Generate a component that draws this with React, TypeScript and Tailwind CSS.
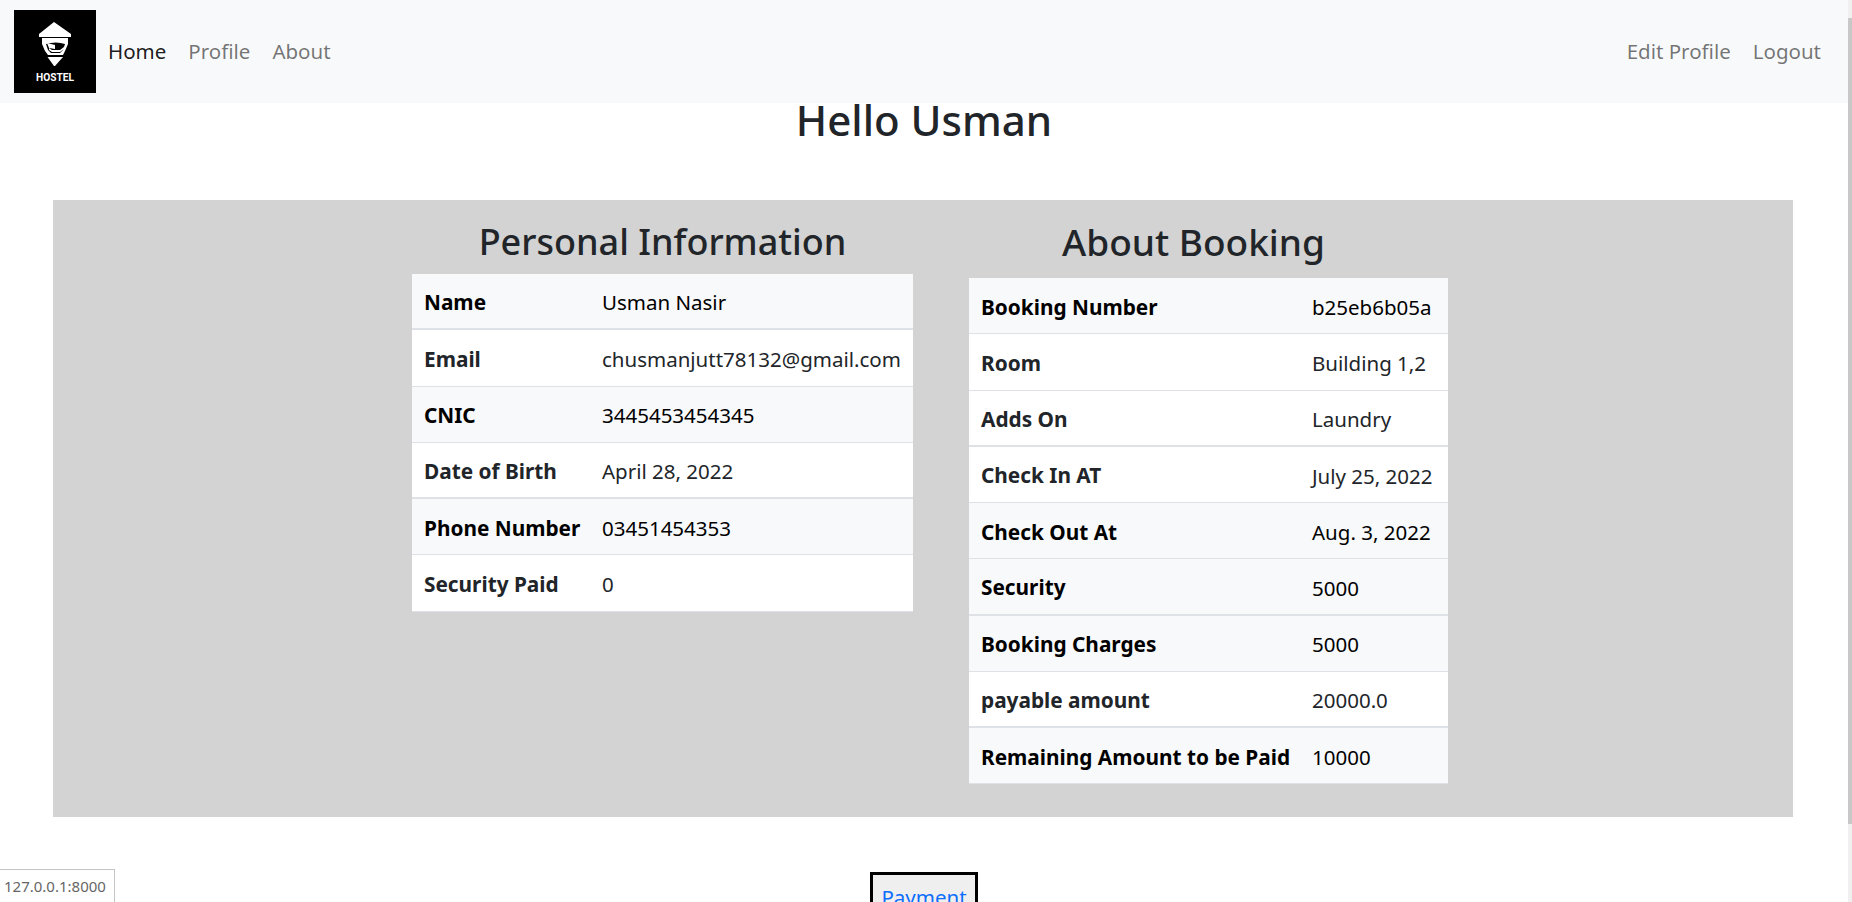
import React from 'react'

type Row = {
  label: string
  value: string
  shaded?: boolean
  thick?: boolean
}

const personal: Row[] = [
  { label: 'Name', value: 'Usman Nasir', shaded: true, thick: true },
  { label: 'Email', value: 'chusmanjutt78132@gmail.com' },
  { label: 'CNIC', value: '3445453454345', shaded: true },
  { label: 'Date of Birth', value: 'April 28, 2022', thick: true },
  { label: 'Phone Number', value: '03451454353', shaded: true },
  { label: 'Security Paid', value: '0' },
]

const booking: Row[] = [
  { label: 'Booking Number', value: 'b25eb6b05a', shaded: true },
  { label: 'Room', value: 'Building 1,2' },
  { label: 'Adds On', value: 'Laundry', thick: true },
  { label: 'Check In AT', value: 'July 25, 2022' },
  { label: 'Check Out At', value: 'Aug. 3, 2022', shaded: true },
  { label: 'Security', value: '5000', shaded: true, thick: true },
  { label: 'Booking Charges', value: '5000', shaded: true },
  { label: 'payable amount', value: '20000.0', thick: true },
  { label: 'Remaining Amount to be Paid', value: '10000', shaded: true },
]

function Logo() {
  return (
    <svg width="82" height="83" viewBox="0 0 82 83" className="shrink-0 bg-black">
      {/* roof */}
      <path d="M40 12 L57 24 V27 H25 V24 Z" fill="#fff" />
      {/* band under the roof and the two sides */}
      <path d="M28 28 H54 V34 L51 41 L49 45 H34 L31 41 L28 34 Z" fill="#fff" />
      {/* room */}
      <path d="M32 34 L34 40 L37 43 H46 L49 40 L51 34 Q42 31 32 34 Z" fill="#000" />
      {/* pillow and bed */}
      <path d="M33 33 L41 35 V39 L35 38 Z" fill="#fff" />
      <path d="M35 38 L38 40 H46 L50 37 V39 L46 42 H38 L35 40 Z" fill="#fff" />
      {/* point */}
      <path d="M33.5 47 H49 L41 56 H40 Z" fill="#fff" />
      <text x="41" y="71" fill="#fff" fontSize="11" fontWeight="700" textAnchor="middle" textLength="38" lengthAdjust="spacingAndGlyphs" fontFamily="Roboto, sans-serif">
        HOSTEL
      </text>
    </svg>
  )
}

function InfoTable({ rows, labelWidth }: { rows: Row[]; labelWidth: string }) {
  return (
    <div className="w-full bg-white">
      {rows.map((row) => (
        <div
          key={row.label}
          className={`flex h-[56.25px] items-center pt-[3px] border-[#dee2e6] ${row.thick ? 'border-b-2' : 'border-b'} ${row.shaded ? 'bg-[#f8f9fa] text-black' : 'bg-white text-[#212529]'}`}
        >
          <div className={`${labelWidth} shrink-0 pl-3 text-[20.8px] font-bold whitespace-nowrap`}>{row.label}</div>
          <div className="pl-[10px] whitespace-nowrap">{row.value}</div>
        </div>
      ))}
    </div>
  )
}

export default function App() {
  return (
    <div className="relative flex h-[902px] overflow-hidden bg-white font-['Noto_Sans',sans-serif] text-[20.5px] text-[#212529]">
      <div className="min-w-0 flex-1">
        <nav className="flex h-[103px] items-center justify-between bg-[#f8f9fa] pl-[14px] pr-[27px]">
          <div className="flex items-center">
            <Logo />
            <a className="ml-3 text-black/90">Home</a>
            <a className="ml-[22px] text-black/55">Profile</a>
            <a className="ml-[22px] text-black/55">About</a>
          </div>
          <div className="flex items-center gap-[22px] text-black/55">
            <a>Edit Profile</a>
            <a>Logout</a>
          </div>
        </nav>

        <h1 className="text-center text-[42px] leading-[33px] font-medium">Hello Usman</h1>

        <section className="mt-[64px] ml-[53px] mr-[55px] flex h-[617px] items-start gap-[56px] bg-[#d3d3d3] pl-[359px]">
          <div className="w-[501px]">
            <h2 className="h-[74px] text-center text-[36px] leading-[84px] font-medium">Personal Information</h2>
            <InfoTable rows={personal} labelWidth="w-[180px]" />
          </div>
          <div className="w-[479px]">
            <h2 className="h-[78px] pr-[30px] text-center text-[37px] leading-[84px] font-medium">About Booking</h2>
            <InfoTable rows={booking} labelWidth="w-[333px]" />
          </div>
        </section>

        <div className="mt-[55px] flex justify-center">
          <button className="border-[3px] border-black bg-[#efefef] px-[8px] py-[7px] text-[#0d6efd]">Payment</button>
        </div>
      </div>

      <div className="w-1 shrink-0 bg-[#f0f0f0]">
        <div className="mt-[18px] h-[806px] bg-[#c8c8c8]" />
      </div>

      <div className="absolute bottom-0 left-0 h-[33px] w-[115px] border-t border-r border-[#c4c4c4] bg-white pl-[4px] text-[15px] leading-[32px] text-[#666]">
        127.0.0.1:8000
      </div>
    </div>
  )
}
